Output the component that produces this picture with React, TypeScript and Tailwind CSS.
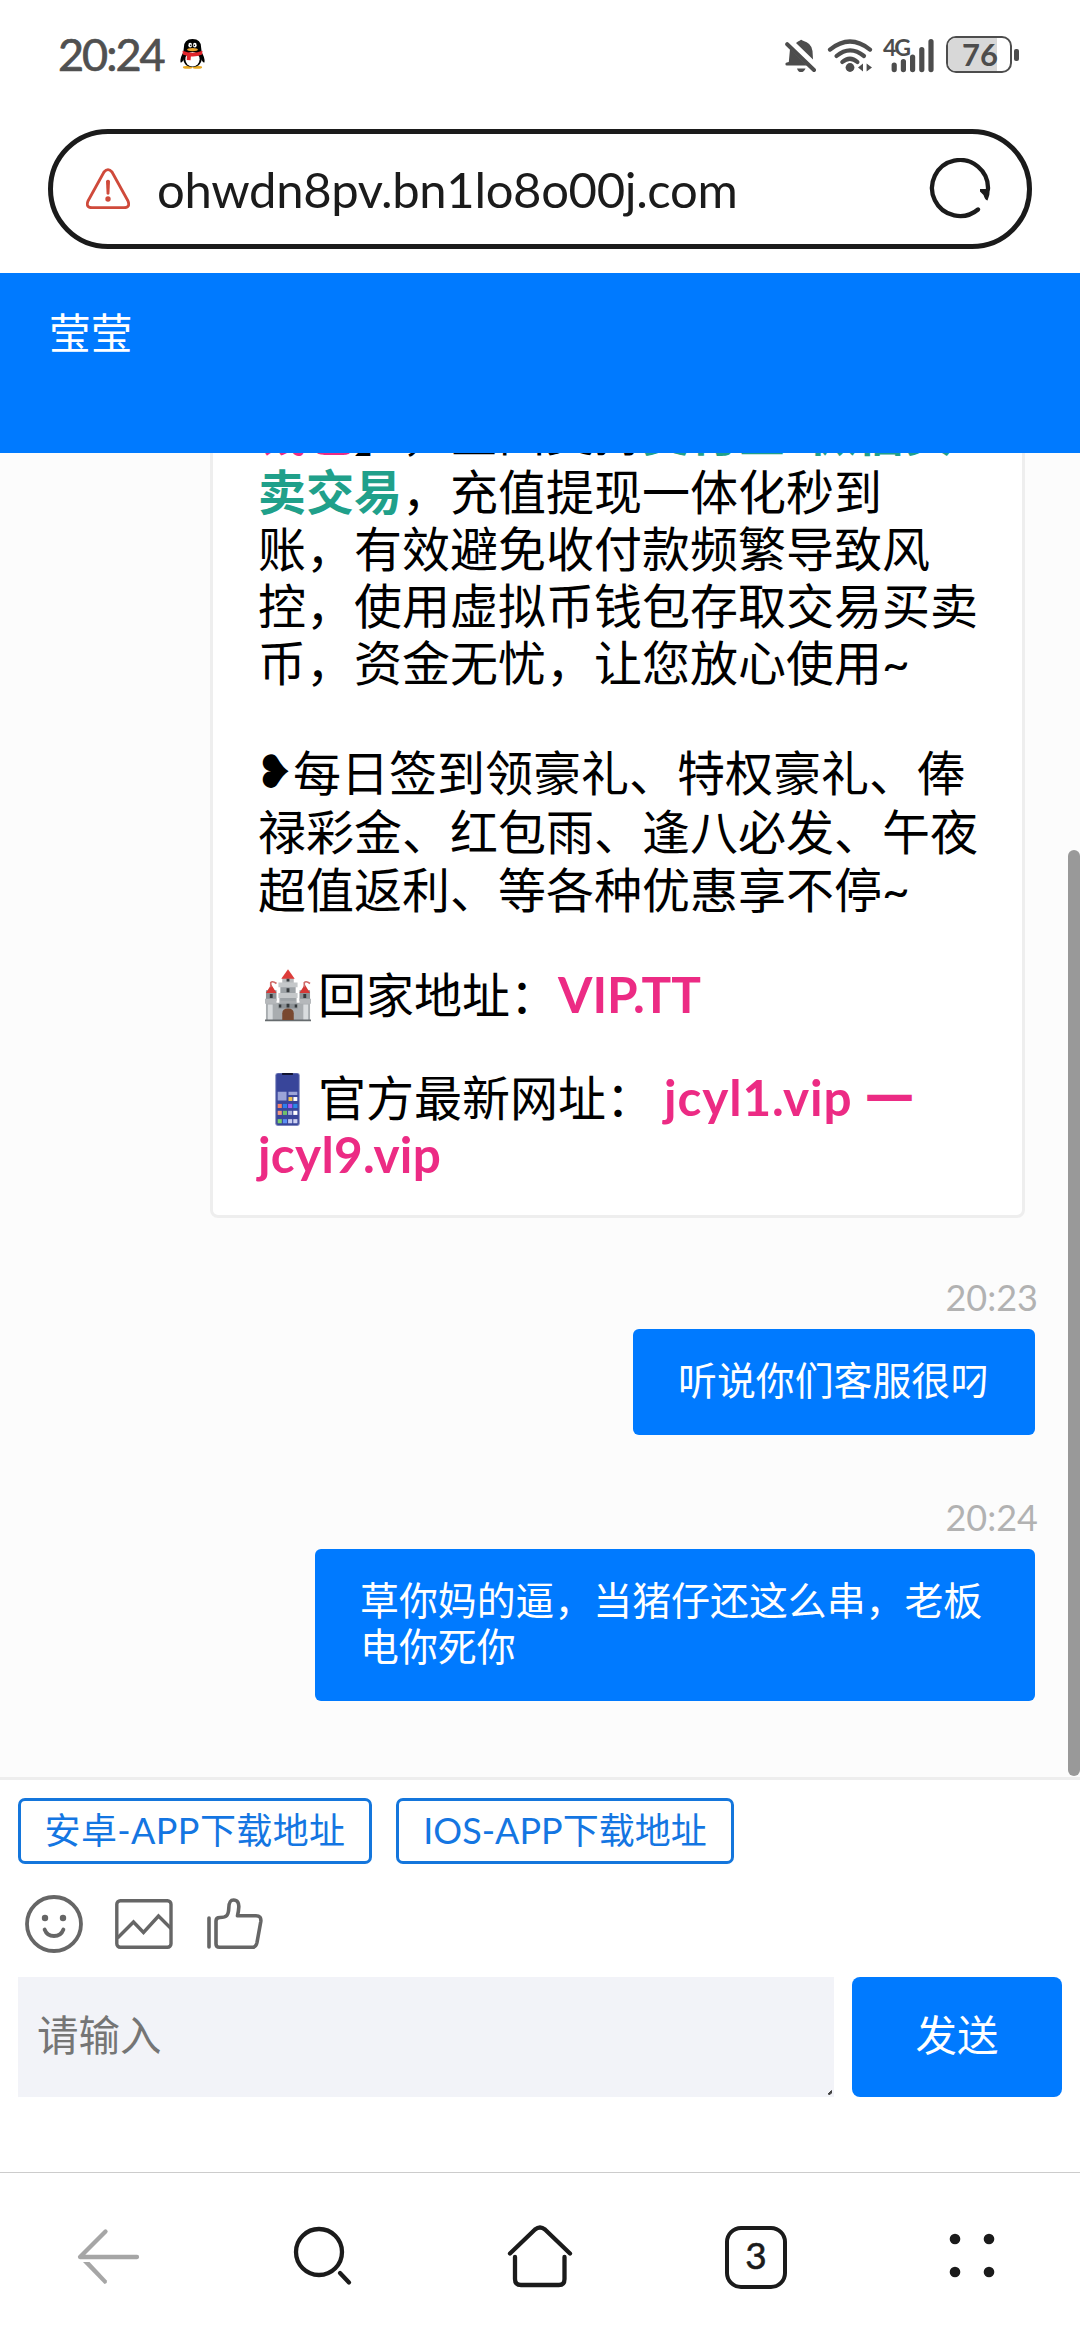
import type { ReactNode } from "react";

const FONT = "font-[Lato,'Noto_Sans_CJK_SC',sans-serif]";

function Penguin() {
  return (
    <svg className="ml-[16px] h-[31px] w-[25px]" viewBox="0 0 26 32">
      <ellipse cx="8" cy="29.3" rx="5" ry="1.6" fill="#e8a820" />
      <ellipse cx="18" cy="29.3" rx="5" ry="1.6" fill="#e8a820" />
      <path d="M4 13 Q0 19 .5 24 Q2 25 4 21 Z M22 13 Q26 19 25.5 24 Q24 25 22 21 Z" fill="#000" />
      <path d="M4 9 Q4 0 13 0 Q22 0 22 9 L23 17 Q23 29 13 29 Q3 29 3 17 Z" fill="#000" />
      <ellipse cx="13" cy="21" rx="7.4" ry="7.6" fill="#fff" />
      <ellipse cx="10.6" cy="6.3" rx="1.9" ry="2.5" fill="#fff" />
      <ellipse cx="15.4" cy="6.3" rx="1.9" ry="2.5" fill="#fff" />
      <circle cx="11.2" cy="6.5" r=".8" fill="#000" />
      <circle cx="14.9" cy="6.5" r=".8" fill="#000" />
      <ellipse cx="13" cy="10.9" rx="5.6" ry="1.7" fill="#e9a12a" />
      <path d="M2.6 12 Q13 16.5 23.4 12 L23 16 Q17 18.6 11.3 18 L11 22 L7 21.6 L7.2 17.2 L3 16 Z" fill="#e0242b" />
    </svg>
  );
}

function BellOff() {
  return (
    <svg className="h-[36px] w-[32px]" viewBox="0 0 32 36" fill="#4d4d4d">
      <path d="M5 12 L22 28.6 H1.8 Q.4 28.6 .4 27 Q.4 25.8 1.8 25.6 L3.8 25 Z" />
      <path d="M11 6 Q13 4 15 3.4 Q16 2 17.5 3.4 Q27 6 27.5 14 L28 22.5 Z" />
      <path d="M12 31.4 H20.5 Q19 35 16 35 Q13 35 12 31.4 Z" />
      <path d="M2.2 7.2 L29 33" stroke="#4d4d4d" strokeWidth="4" strokeLinecap="round" />
    </svg>
  );
}

function Wifi() {
  return (
    <svg className="ml-[10px] h-[36px] w-[46px]" viewBox="0 0 46 36" fill="none" stroke="#4d4d4d" strokeWidth="4.2" strokeLinecap="round">
      <path d="M3 12.6 Q23 -3.6 43 12.6" />
      <path d="M9.5 19 Q23 7.6 37 19" />
      <path d="M15.3 25 Q23 18.4 30.4 25" />
      <circle cx="23" cy="30.5" r="4.4" fill="#4d4d4d" stroke="none" />
      <path d="M31 30.5 L36 26.6 V34.6 Z M45 30.5 L39.6 26.6 V34.6 Z" fill="#4d4d4d" stroke="none" />
    </svg>
  );
}

function Signal() {
  return (
    <div className="relative ml-[11px] h-[36px] w-[50px]">
      <span className="absolute left-[-1px] top-0 text-[23px] font-bold leading-[20px] tracking-[-2px] text-[#4d4d4d]">4G</span>
      <svg className="h-[36px] w-[50px]" viewBox="0 0 50 36" stroke="#4d4d4d" strokeWidth="5.2" strokeLinecap="round">
        <path d="M10.2 28 V32.6 M19.4 24.6 V32.6 M28.6 20 V32.6 M37.8 12.6 V32.6 M47 4.6 V32.6" />
      </svg>
    </div>
  );
}

function Battery() {
  return (
    <div className="ml-[12px] flex items-center">
      <div className="relative h-[37px] w-[66px] overflow-hidden rounded-[10px] border-[2.5px] border-[#4d4d4d] bg-white">
        <div className="h-full w-[49px] bg-[#d8d8d8]" />
        <span className="absolute inset-0 pl-[2px] text-center text-[31px] font-bold leading-[32px] text-[#4d4d4d]">76</span>
      </div>
      <div className="ml-[2px] h-[12px] w-[5px] rounded-[2px] bg-[#4d4d4d]" />
    </div>
  );
}

function StatusBar() {
  return (
    <div className="flex h-[109px] items-center pl-[58px] pr-[61px]">
      <span className="text-[45px] leading-none tracking-[-2px] text-[#505050] [-webkit-text-stroke:0.7px_#505050]">20:24</span>
      <Penguin />
      <div className="flex-1" />
      <BellOff />
      <Wifi />
      <Signal />
      <Battery />
    </div>
  );
}

function AddressBar() {
  return (
    <div className="mx-[48px] mt-[20px] flex h-[120px] items-center rounded-full border-[5px] border-[#1b1b1b] bg-white pl-[33px] pr-[36px]">
      <svg className="h-[42px] w-[44px]" viewBox="0 0 44 42" fill="none" stroke="#cf4a3b" strokeWidth="2.8">
        <path d="M18 4 Q22 -.8 26 4 L42 33 Q44.500 39.600 38 39.600 H6 Q-.5 39.600 2 33 Z" strokeLinejoin="round" />
        <path d="M20 13 Q22 10.500 24 13 L23.400 26 Q22 27.600 20.600 26 Z" fill="#cf4a3b" stroke="none" />
        <circle cx="22" cy="31" r="2.700" fill="#cf4a3b" stroke="none" />
      </svg>
      <span className="ml-[27px] whitespace-nowrap text-[49px] leading-none tracking-[-0.35px] text-[#1b1b1b]">ohwdn8pv.bn1lo8o00j.com</span>
      <div className="flex-1" />
      <svg className="h-[62px] w-[62px] shrink-0" viewBox="0 0 62 62" fill="none">
        <path d="M59 31 A28 28 0 1 0 49 51.500" stroke="#1b1b1b" strokeWidth="4.300" strokeLinecap="round" />
        <path d="M51 31 H60.800 Q61 37 58.500 42.500 Q56 42 54.500 37 L51 33.500 Z" fill="#1b1b1b" />
      </svg>
    </div>
  );
}

function Castle() {
  return (
    <svg className="ml-[7px] mr-[7px] h-[54px] w-[46px]" viewBox="0 0 48 56">
      <path d="M1 32 H11 V36 H15 V30 H33 V36 H37 V32 H47 V55 H1 Z" fill="#a9adb0" />
      <path d="M16 16 H32 V34 H16 Z" fill="#9da2a6" />
      <path d="M18 10 H30 V18 H18 Z" fill="#b7babd" />
      <path d="M14 15 H34 V20 H14 Z M14 26 H34 V31 H14 Z" fill="#c5c8ca" />
      <path d="M14 37 H34 V42 H14 Z M1 23 H12 V34 H1 Z M36 23 H47 V34 H36 Z" fill="#8d9296" />
      <path d="M0 32 H12 V37 H0 Z M36 32 H48 V37 H36 Z" fill="#b5b8bb" />
      <path d="M3 38 H8 V55 H3 Z M40 38 H45 V55 H40 Z" fill="#d9dcde" />
      <path d="M24 1 L31 11 H17 Z" fill="#dd3c3a" />
      <path d="M6.500 17 L12 26 H1 Z M41.500 17 L47 26 H36 Z" fill="#d53836" />
      <path d="M6 20 V15 Q8 13 12 16 M41 20 V15 Q43 13 47 16" fill="none" stroke="#cf6a68" strokeWidth="1.700" />
      <path d="M22.500 11 H25.500 V14 H22.500 Z M22.500 21 H25.500 V25 H22.500 Z M14.500 38 H17 V41 H14.500 Z M22.500 37 H25.500 V41 H22.500 Z M31 38 H33.500 V41 H31 Z M5 27 H8 V31 H5 Z M40 27 H43 V31 H40 Z" fill="#35393c" />
      <path d="M0 53.500 H48 V55.500 H0 Z" fill="#666b6e" />
      <path d="M18 54 V47 Q18 42 24 42 Q30 42 30 47 V54 Z" fill="#79482f" />
    </svg>
  );
}

function Phone() {
  const rows = [
    ["#f0806a", "#2e7df0", "#a558f2", "#2a88e8"],
    ["#f29a80", "#6fc06b", "#a9afda", "#fff"],
    ["#7bd069", "#5b8ff5", "#c9cdf0", "#cfd2f2"],
  ];
  return (
    <svg className="ml-[17px] mr-[18px] mt-[5px] h-[55px] w-[25px]" viewBox="0 0 25 56">
      <rect x="0" y="1" width="25" height="54" rx="2.500" fill="#7d86bd" />
      <rect x="1" y="1.500" width="23" height="52.500" rx="2" fill="#38459a" />
      <path d="M7 1 H18 V3 H7 Z" fill="#10132e" />
      <path d="M2.500 20 H11.500 V29 H2.500 Z M13.500 20 H22.500 V23.500 H13.500 Z" fill="#9ba4d8" />
      <rect x="13.500" y="25.500" width="4" height="4" fill="#efc24c" />
      <rect x="18.500" y="25.500" width="4" height="4" fill="#fff" />
      {rows.map((row, r) =>
        row.map((fill, c) => (
          <rect key={`${r}-${c}`} x={2.5 + c * 5.3} y={[32.500, 39.500, 48][r]} width="4.200" height="4.200" fill={fill} />
        )),
      )}
    </svg>
  );
}

function Line({ children, className = "h-[57.200px]" }: { children: ReactNode; className?: string }) {
  return <div className={`flex items-center whitespace-pre ${className}`}>{children}</div>;
}

function RichCard() {
  return (
    <div className="ml-[210px] flex w-[815px] shrink-0 flex-col rounded-[8px] border-[3px] border-[#eee] bg-white pb-[32px] pl-[45px] text-[48px] leading-[57px] text-black">
      <Line className="h-[57.200px] pb-[4px]">
        <b className="text-[#ec2b84]">钱包</b>
        <b>】</b>，全面支持<b className="text-[#20a08a]">支付宝<span className="inline-block w-[23px] text-center">-</span>微信买</b>
      </Line>
      <Line>
        <b className="text-[#20a08a]">卖交易</b>，充值提现一体化秒到
      </Line>
      <Line>账，有效避免收付款频繁导致风</Line>
      <Line>控，使用虚拟币钱包存取交易买卖</Line>
      <Line>币，资金无忧，让您放心使用~</Line>
      <Line className="mt-[50.500px] h-[60px]">
        <span className="-ml-[3px] inline-block w-[38px] font-['DejaVu_Sans'] text-[46px]">❥</span>每日签到领豪礼、特权豪礼、俸
      </Line>
      <Line className="h-[59px]">禄彩金、红包雨、逢八必发、午夜</Line>
      <Line className="h-[57px]">超值返利、等各种优惠享不停~</Line>
      <Line className="mt-[48px] h-[57px]">
        <Castle />
        回家地址：<b className="text-[49.500px] text-[#ec2b84]">VIP.TT</b>
      </Line>
      <Line className="mt-[45.500px] h-[57px]">
        <Phone />
        官方最新网址：<b className="ml-[10px] text-[49.500px] tracking-[0.9px] text-[#ec2b84]">jcyl1.vip </b>
        <b className="text-[#ec2b84]">一</b>
      </Line>
      <Line className="h-[57px]">
        <b className="text-[49.500px] tracking-[0.3px] text-[#ec2b84]">jcyl9.vip</b>
      </Line>
    </div>
  );
}

function Time({ children, className }: { children: ReactNode; className: string }) {
  return <div className={`h-[40px] shrink-0 pr-[42px] text-right text-[36px] leading-[38px] text-[#b2b2b2] ${className}`}>{children}</div>;
}

function Bubble({ lines, className }: { lines: string[]; className: string }) {
  return (
    <div className={`mr-[45px] shrink-0 self-end rounded-[6px] bg-[#007aff] pl-[45px] pt-[28px] text-[38.900px] leading-[46px] text-white ${className}`}>
      {lines.map((l) => (
        <div key={l} className="whitespace-nowrap">{l}</div>
      ))}
    </div>
  );
}

function Messages() {
  return (
    <div className="relative flex h-[1324px] flex-col justify-end overflow-hidden bg-[#fcfcfc] pb-[76px]">
      <RichCard />
      <Time className="mt-[60.500px]">20:23</Time>
      <Bubble lines={["听说你们客服很叼"]} className="mt-[11px] h-[106px] w-[402px]" />
      <Time className="mt-[63px]">20:24</Time>
      <Bubble lines={["草你妈的逼，当猪仔还这么串，老板", "电你死你"]} className="mt-[11px] h-[152px] w-[720px]" />
      <div className="absolute bottom-[1px] right-0 h-[926px] w-[12px] rounded-[6px] bg-[#999]" />
    </div>
  );
}

function Composer() {
  return (
    <div className="h-[395px] border-t-[3px] border-[#eee] bg-white px-[18px] pt-[18px]">
      <div className="flex h-[66px] gap-[24px] text-[36px] leading-[58px] text-[#1476e2]">
        <button className="w-[354px] whitespace-nowrap rounded-[7px] border-[3px] border-[#1476dc] pb-[2px] tracking-[0.4px]">安卓-APP下载地址</button>
        <button className="w-[338px] whitespace-nowrap rounded-[7px] border-[3px] border-[#1476dc] pb-[2px]">IOS-APP下载地址</button>
      </div>
      <div className="mt-[30px] flex h-[60px] pl-[6px]">
        <svg className="h-[60px] w-[60px]" viewBox="0 0 60 60" fill="none" stroke="#666" strokeWidth="3.800">
          <circle cx="30" cy="30" r="27" />
          <path d="M20.600 35.500 Q23 42 30 42 Q37 42 39.400 35.500" strokeLinecap="round" />
          <circle cx="21" cy="24" r="3.200" fill="#666" stroke="none" />
          <circle cx="39" cy="24" r="3.200" fill="#666" stroke="none" />
        </svg>
        <svg className="ml-[30px] h-[60px] w-[60px]" viewBox="0 0 60 60" fill="none" stroke="#666" strokeWidth="3.400">
          <rect x="2.800" y="6.700" width="54.200" height="46.600" rx="3.500" />
          <path d="M3.500 44 L19.500 28 L29.500 38.500 L44.500 22 L57 34.500" />
        </svg>
        <svg className="ml-[30px] h-[60px] w-[60px]" viewBox="0 0 60 60" fill="none" stroke="#666" strokeWidth="3.600" strokeLinejoin="round" strokeLinecap="round">
          <path d="M5 24 V53" />
          <path d="M12 27 Q12 23.500 16 23.500 C23 23.500 24.500 21 24.800 14 C25 8.500 26 6 29.500 6 C33.500 6 35 9 34.800 13 Q34.500 18 33.500 21.700 H52 Q57.500 21.700 56.800 27.500 L53 48.500 Q52 53.300 48 53.300 H15.500 Q12 53.300 12 50 Z" />
        </svg>
      </div>
      <div className="mt-[23px] flex h-[120px] gap-[18px] text-[41.500px]">
        <div className="relative w-[816px] bg-[#f2f3f8] pl-[19px] leading-[116px] text-[#757575]">
          请输入
          <svg className="absolute bottom-[2px] right-[1px] h-[6px] w-[6px]" viewBox="0 0 6 6">
            <path d="M1 5 L4.500 1.500 V4 L3 5.500 Z" fill="#444" stroke="#444" />
          </svg>
        </div>
        <button className="w-[210px] rounded-[8px] bg-[#007aff] pb-[4px] text-white">发送</button>
      </div>
    </div>
  );
}

function NavBar() {
  return (
    <div className="grid h-[168px] grid-cols-5 justify-items-center border-t border-[#ccc] bg-white pt-[50px]">
      <svg className="h-[70px] w-[70px]" viewBox="0 0 70 70" fill="none" stroke="#a6a6a6" strokeWidth="4.300" strokeLinecap="round">
        <path d="M64 34 H7 L32.500 8.500" strokeLinejoin="round" />
        <path d="M10 39 H16.500 L33.800 57.500 Q34.500 60.500 31.500 61 Z" fill="#a6a6a6" stroke="none" />
      </svg>
      <svg className="h-[70px] w-[70px]" viewBox="0 0 70 70" fill="none" stroke="#1b1b1b" strokeWidth="4.300" strokeLinecap="round">
        <circle cx="30" cy="29" r="23" />
        <path d="M51 50 L60 59.500" />
      </svg>
      <svg className="h-[70px] w-[70px]" viewBox="0 0 70 70" fill="none" stroke="#1b1b1b" strokeWidth="4.300" strokeLinecap="round" strokeLinejoin="round">
        <path d="M5 30.500 L30 6.500 Q35 2.500 40 6.500 L65 30.500" />
        <path d="M10 34 V56 Q10 62 16 62 H54 Q59.500 62 59.500 56 V34" />
      </svg>
      <div className="mt-[3px] h-[63px] w-[62px] rounded-[16px] border-[4.500px] border-[#1b1b1b] text-center text-[37px] leading-[50px] text-[#1b1b1b] [-webkit-text-stroke:0.6px_#1b1b1b]">3</div>
      <svg className="h-[70px] w-[70px]" viewBox="0 0 70 70" fill="#1b1b1b">
        <circle cx="18" cy="16" r="5.300" />
        <circle cx="52" cy="16" r="5.300" />
        <circle cx="18" cy="49" r="5.300" />
        <circle cx="52" cy="49" r="5.300" />
      </svg>
    </div>
  );
}

export default function App() {
  return (
    <div className={`h-[2340px] w-[1080px] overflow-hidden bg-white ${FONT}`}>
      <StatusBar />
      <AddressBar />
      <div className="mt-[24px] h-[180px] bg-[#007aff] pl-[49px] pt-[36px] text-[41.700px] leading-[48px] text-white">莹莹</div>
      <Messages />
      <Composer />
      <NavBar />
    </div>
  );
}
